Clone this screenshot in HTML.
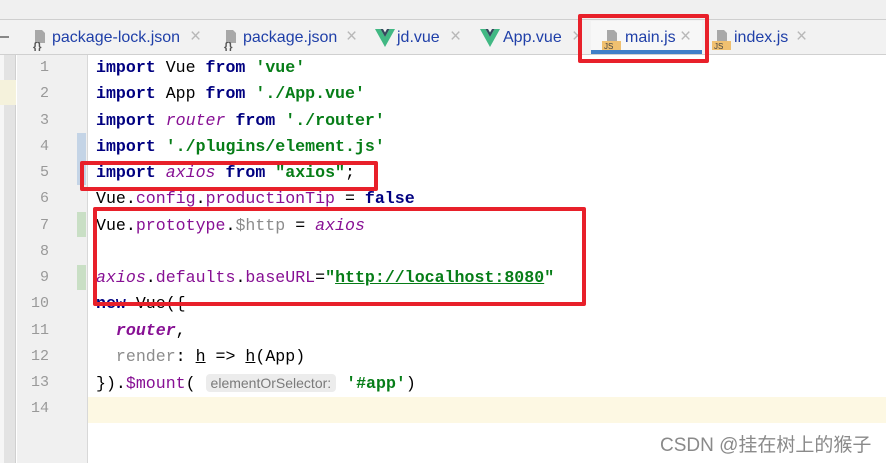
<!DOCTYPE html>
<html><head><meta charset="utf-8"><style>
*{margin:0;padding:0;box-sizing:border-box}
body{width:886px;height:463px;overflow:hidden;background:#fff;position:relative;font-family:"Liberation Sans",sans-serif}
.abs{position:absolute}
.top{left:0;top:0;width:886px;height:20px;background:#f0f0f0;border-bottom:1px solid #cfcfcf}
.tabs{left:0;top:20px;width:886px;height:35px;background:#f2f2f2;border-bottom:1px solid #d0d0d0}
.tab{position:absolute;top:28px;font-size:16px;color:#1f3fa8;line-height:20px}
.x{position:absolute;top:27px;font-size:19px;color:#b8b8b8;line-height:20px}
.gut{left:17px;top:55px;width:71px;height:408px;background:#f0f0f0;border-right:1px solid #d8d8d8}
.strip{left:4px;top:55px;width:12px;height:408px;background:#e3e3e3;border-right:1px solid #d0d0d0}
.ln{position:absolute;left:17px;width:32px;text-align:right;font-family:"Liberation Mono",monospace;font-size:15px;color:#999;line-height:26px}
.code{position:absolute;left:96px;font-family:"Liberation Mono",monospace;font-size:16.6px;line-height:26px;white-space:pre;color:#000}
.k{color:#000080;font-weight:bold}
.s{color:#067d17;font-weight:bold}
.p{color:#871094;font-style:italic}
.m{color:#871094}
.g{color:#8c8c8c}
.u{text-decoration:underline}
.hint{background:#ececec;color:#7a7a7a;font-family:"Liberation Sans",sans-serif;font-size:14px;border-radius:4px;padding:1px 5px}
.red{position:absolute;border:4px solid #e8202a;border-radius:2px}
</style></head><body>
<div class="abs top"></div>
<div class="abs tabs"></div>
<div class="abs" style="left:591px;top:21px;width:111px;height:33px;background:#f7f7f7"></div>
<div class="abs" style="left:591px;top:50px;width:111px;height:4px;background:#3f7fc8"></div>
<div class="abs" style="left:0;top:36px;width:9px;height:2px;background:#888"></div>

<svg class="abs" style="left:31px;top:29px" width="20" height="22"><path d="M4 1H11L14 4V14H4Z" fill="#a8a8a8"/><text x="2" y="21" font-size="11" font-weight="bold" fill="#555" font-family="Liberation Sans">{}</text></svg>
<div class="tab" style="left:52px">package-lock.json</div><div class="x" style="left:190px">×</div>
<svg class="abs" style="left:222px;top:29px" width="20" height="22"><path d="M4 1H11L14 4V14H4Z" fill="#a8a8a8"/><text x="2" y="21" font-size="11" font-weight="bold" fill="#555" font-family="Liberation Sans">{}</text></svg>
<div class="tab" style="left:243px">package.json</div><div class="x" style="left:346px">×</div>
<svg class="abs" style="left:375px;top:29px" width="20" height="18"><path d="M0 0H5.5L10 8L14.5 0H20L10 18Z" fill="#41b883"/><path d="M5.5 0H8L10 3.5L12 0H14.5L10 8Z" fill="#35495e"/></svg>
<div class="tab" style="left:397px">jd.vue</div><div class="x" style="left:450px">×</div>
<svg class="abs" style="left:480px;top:29px" width="20" height="18"><path d="M0 0H5.5L10 8L14.5 0H20L10 18Z" fill="#41b883"/><path d="M5.5 0H8L10 3.5L12 0H14.5L10 8Z" fill="#35495e"/></svg>
<div class="tab" style="left:503px">App.vue</div><div class="x" style="left:572px">×</div>
<svg class="abs" style="left:602px;top:29px" width="20" height="21"><path d="M5 1H12L15 4V12H5Z" fill="#a8a8a8"/><rect x="0" y="12" width="19" height="9" fill="#f0c070"/><text x="2" y="20" font-size="8" fill="#444" font-family="Liberation Sans">JS</text></svg>
<div class="tab" style="left:625px;color:#1f3fa8">main.js</div><div class="x" style="left:680px">×</div>
<svg class="abs" style="left:712px;top:29px" width="20" height="21"><path d="M5 1H12L15 4V12H5Z" fill="#a8a8a8"/><rect x="0" y="12" width="19" height="9" fill="#f0c070"/><text x="2" y="20" font-size="8" fill="#444" font-family="Liberation Sans">JS</text></svg>
<div class="tab" style="left:734px">index.js</div><div class="x" style="left:796px">×</div>

<div class="abs" style="left:0;top:55px;width:4px;height:408px;background:#f6f6f6"></div>
<div class="abs strip"></div>
<div class="abs" style="left:0;top:80px;width:16px;height:25px;background:#f5f2dc"></div>
<div class="abs gut"></div>
<div class="abs" style="left:88px;top:397px;width:798px;height:26px;background:#fdf8e3"></div>
<div class="abs" style="left:77px;top:133px;width:9px;height:52px;background:#c4d4e6"></div>
<div class="abs" style="left:77px;top:212px;width:9px;height:25px;background:#c9dfc5"></div>
<div class="abs" style="left:77px;top:265px;width:9px;height:25px;background:#c9dfc5"></div>

<div class="ln" style="top:55px">1</div><div class="ln" style="top:81px">2</div><div class="ln" style="top:108px">3</div><div class="ln" style="top:134px">4</div><div class="ln" style="top:160px">5</div><div class="ln" style="top:186px">6</div><div class="ln" style="top:213px">7</div><div class="ln" style="top:239px">8</div><div class="ln" style="top:265px">9</div><div class="ln" style="top:291px">10</div><div class="ln" style="top:318px">11</div><div class="ln" style="top:344px">12</div><div class="ln" style="top:370px">13</div><div class="ln" style="top:396px">14</div>

<div class="code" style="top:55px"><span class="k">import</span> Vue <span class="k">from</span> <span class="s">'vue'</span></div>
<div class="code" style="top:81px"><span class="k">import</span> App <span class="k">from</span> <span class="s">'./App.vue'</span></div>
<div class="code" style="top:108px"><span class="k">import</span> <span class="p">router</span> <span class="k">from</span> <span class="s">'./router'</span></div>
<div class="code" style="top:134px"><span class="k">import</span> <span class="s">'./plugins/element.js'</span></div>
<div class="code" style="top:160px"><span class="k">import</span> <span class="p">axios</span> <span class="k">from</span> <span class="s">"axios"</span>;</div>
<div class="code" style="top:186px">Vue.<span class="m">config</span>.<span class="m">productionTip</span> = <span class="k">false</span></div>
<div class="code" style="top:213px">Vue.<span class="m">prototype</span>.<span class="g">$http</span> = <span class="p">axios</span></div>
<div class="code" style="top:265px"><span class="p">axios</span>.<span class="m">defaults</span>.<span class="m">baseURL</span>=<span class="s">"<span class="u">http://localhost:8080</span>"</span></div>
<div class="code" style="top:291px"><span class="k">new</span> Vue({</div>
<div class="code" style="top:318px">  <span class="p" style="font-weight:bold">router</span>,</div>
<div class="code" style="top:344px">  <span class="g">render</span>: <span class="u">h</span> => <span class="u">h</span>(App)</div>
<div class="code" style="top:370px">}).<span class="m">$mount</span>( <span class="hint">elementOrSelector:</span> <span class="s">'#app'</span>)</div>

<div class="red" style="left:578px;top:14px;width:131px;height:49px"></div>
<div class="red" style="left:80px;top:161px;width:298px;height:30px"></div>
<div class="red" style="left:93px;top:207px;width:493px;height:99px"></div>

<div class="abs" style="left:660px;top:430px;font-family:'Liberation Sans','Noto Sans CJK SC',sans-serif;font-size:19px;color:#8a8a8a">CSDN @挂在树上的猴子</div>
</body></html>
